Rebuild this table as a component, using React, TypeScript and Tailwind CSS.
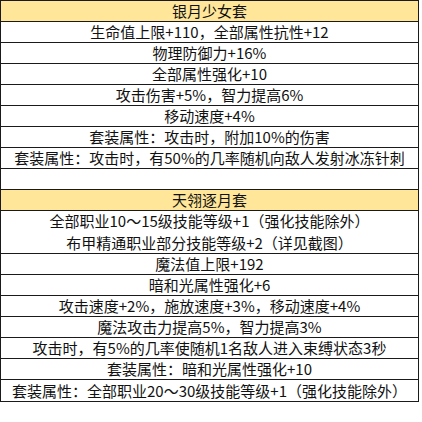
import React from 'react';

type Row = { text: string | string[]; header?: boolean };

const rows: Row[] = [
  { text: '银月少女套', header: true },
  { text: '生命值上限+110，全部属性抗性+12' },
  { text: '物理防御力+16%' },
  { text: '全部属性强化+10' },
  { text: '攻击伤害+5%，智力提高6%' },
  { text: '移动速度+4%' },
  { text: '套装属性：攻击时，附加10%的伤害' },
  { text: '套装属性：攻击时，有50%的几率随机向敌人发射冰冻针刺' },
  { text: '' },
  { text: '天翎逐月套', header: true },
  { text: ['全部职业10～15级技能等级+1（强化技能除外）', '布甲精通职业部分技能等级+2（详见截图）'] },
  { text: '魔法值上限+192' },
  { text: '暗和光属性强化+6' },
  { text: '攻击速度+2%，施放速度+3%，移动速度+4%' },
  { text: '魔法攻击力提高5%，智力提高3%' },
  { text: '攻击时，有5%的几率使随机1名敌人进入束缚状态3秒' },
  { text: '套装属性：暗和光属性强化+10' },
  { text: '套装属性：全部职业20～30级技能等级+1（强化技能除外）' },
];

export default function App() {
  return (
    <div
      className="w-[422px] h-[422px] bg-white text-[15px] text-[#111]"
      style={{ fontFamily: '"Noto Sans CJK SC", "Noto Sans", sans-serif' }}
    >
      <div className="w-[419px] flex flex-col border border-[#1a1a1a]">
        {rows.map((row, i) => {
          const last = i === rows.length - 1;
          const lines = Array.isArray(row.text) ? row.text : [row.text];
          return (
            <div
              key={i}
              className={`flex flex-col items-center justify-center leading-[22px] ${
                lines.length > 1 ? 'h-[43px]' : 'h-[21px]'
              } ${row.header ? 'bg-[#ffe699]' : 'bg-white'} ${last ? '' : 'border-b border-[#1a1a1a]'}`}
            >
              {lines.map((t, j) => (
                <span key={j} className="whitespace-nowrap">
                  {t}
                </span>
              ))}
            </div>
          );
        })}
      </div>
    </div>
  );
}
